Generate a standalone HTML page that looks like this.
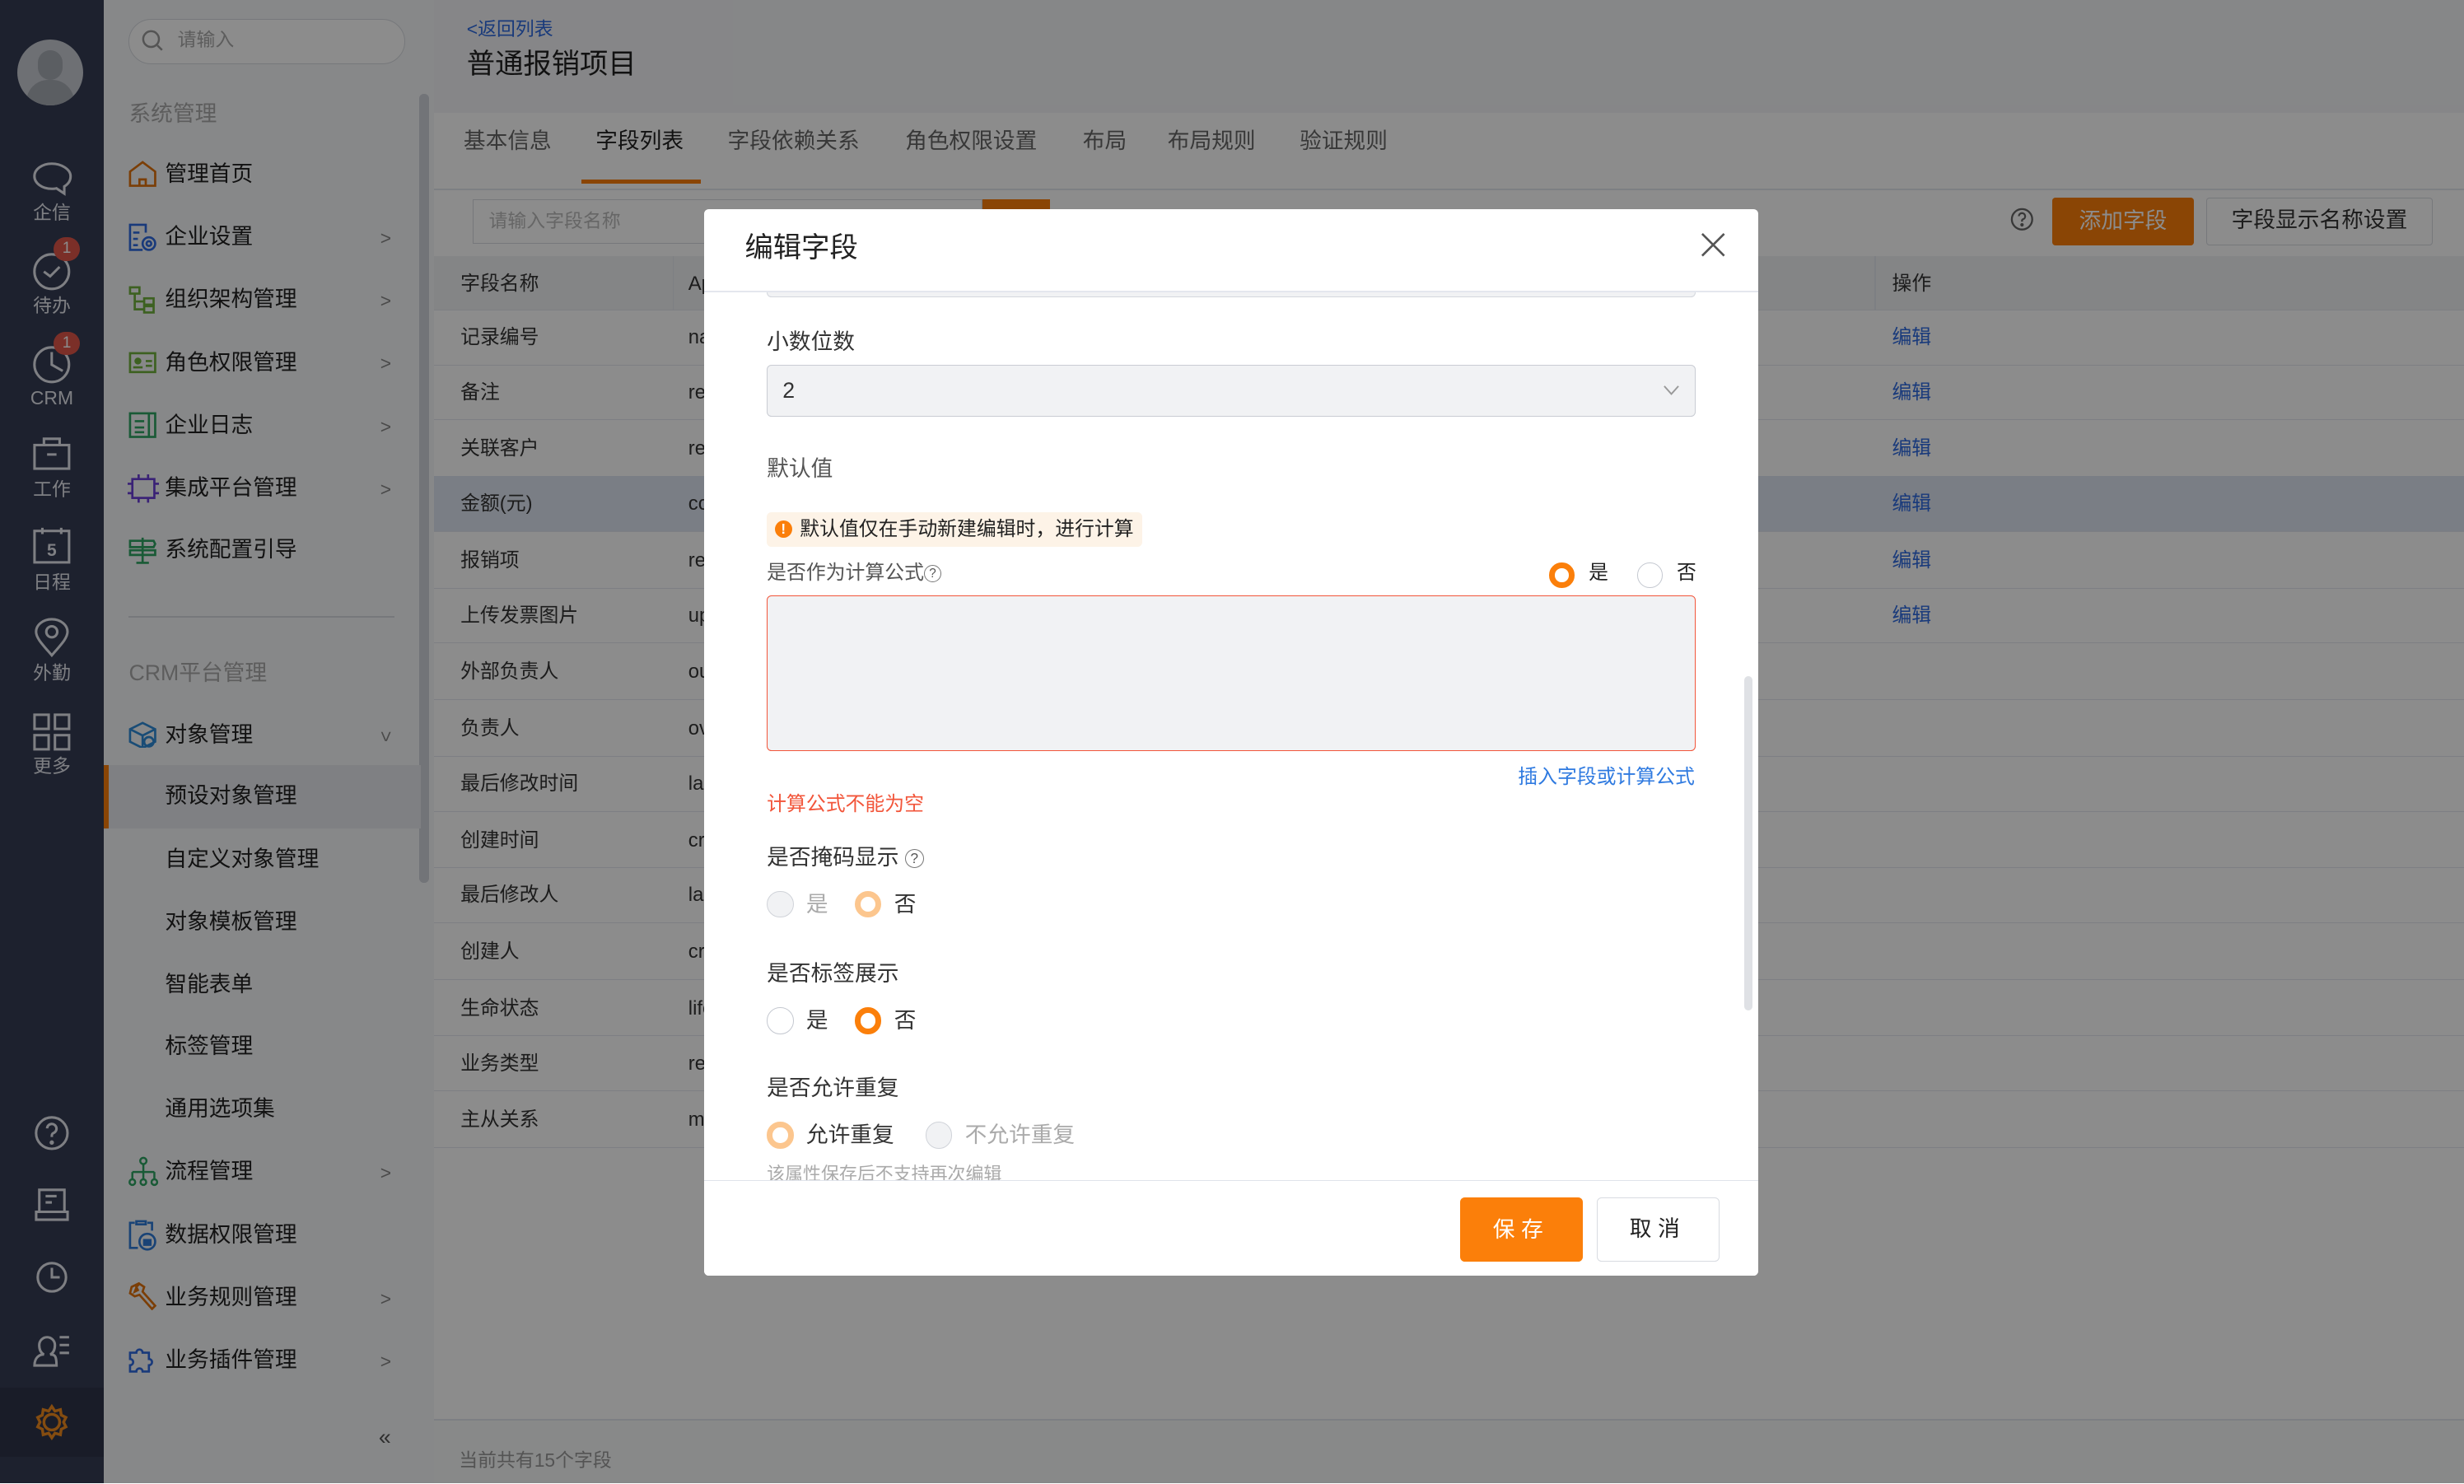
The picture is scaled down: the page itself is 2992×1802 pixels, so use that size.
<!DOCTYPE html>
<html><head><meta charset="utf-8">
<style>
html,body{margin:0;padding:0;}
body{width:2992px;height:1802px;overflow:hidden;background:#fff;font-family:"Liberation Sans","Noto Sans CJK SC",sans-serif;line-height:1.25;}
#w{position:absolute;left:0;top:0;width:1568px;height:944px;zoom:1.9082;overflow:hidden;background:#fff;}
.a{position:absolute;white-space:nowrap;}
.ic{position:absolute;}
.nav{left:0;top:0;width:66px;height:944px;background:#363d55;}
.navt{position:absolute;width:66px;text-align:center;color:#e6e8ee;font-size:12px;}
.menu{left:66px;top:0;width:210px;height:944px;background:#f6f7f9;}
.mi{position:absolute;left:105px;font-size:14px;color:#222;}
.arr{position:absolute;left:242px;font-size:12px;color:#888;}
.row{position:absolute;left:276px;width:1292px;height:35px;border-bottom:1px solid #e4e7ee;font-size:12.5px;color:#333;}
.row span{position:absolute;top:10px;}
.ov{position:absolute;left:0;top:0;width:1568px;height:944px;background:rgba(0,0,0,0.45);}
.m{position:absolute;left:448px;top:133px;width:671px;height:679px;background:#fff;border-radius:3px;overflow:hidden;}
.lab{position:absolute;left:40px;font-size:14px;color:#333;}
.rd{position:absolute;width:14px;height:14px;border-radius:50%;box-sizing:border-box;}
.on{border:4px solid #fb7f0a;background:#fff;}
.off{border:1px solid #c4c8d0;background:#fff;}
.dis{border:1px solid #d0d3d9;background:#f1f2f4;}
.dison{border:4px solid #fcc68e;background:#fff;}
</style></head><body><div id="w">
<!-- nav -->
<div class="a nav">
 <div style="position:absolute;left:11px;top:25px;width:42px;height:42px;border-radius:50%;background:#c9ccd3;overflow:hidden"><div style="position:absolute;left:13px;top:7px;width:16px;height:19px;border-radius:8px;background:#a7abb3"></div><div style="position:absolute;left:6px;top:26px;width:30px;height:20px;border-radius:14px 14px 0 0;background:#a7abb3"></div></div>
 <svg class="ic" style="left:20px;top:101px" width="26" height="26" viewBox="0 0 26 26" fill="none" stroke="#e6e8ee" stroke-width="1.6"><path d="M13 3C7 3 2 6.5 2 11s5 8 11 8c1 0 2 0 3-.3L21 22v-4.5c2.5-1.5 4-3.8 4-6.5C25 6.5 19 3 13 3z"/></svg>
 <div class="navt" style="top:128px">企信</div>
 <svg class="ic" style="left:20px;top:160px" width="26" height="26" viewBox="0 0 26 26" fill="none" stroke="#e6e8ee" stroke-width="1.6"><circle cx="13" cy="13" r="11"/><path d="M8 13l4 3 6-6"/></svg>
 <div style="position:absolute;left:34px;top:151px;width:17px;height:15px;border-radius:8px;background:#e0574a;color:#fff;font-size:10px;text-align:center;line-height:15px">1</div>
 <div class="navt" style="top:187px">待办</div>
 <svg class="ic" style="left:20px;top:219px" width="26" height="26" viewBox="0 0 26 26" fill="none" stroke="#e6e8ee" stroke-width="1.6"><circle cx="13" cy="13" r="11"/><path d="M13 5v8l7 4"/></svg>
 <div style="position:absolute;left:34px;top:211px;width:17px;height:15px;border-radius:8px;background:#e0574a;color:#fff;font-size:10px;text-align:center;line-height:15px">1</div>
 <div class="navt" style="top:246px">CRM</div>
 <svg class="ic" style="left:21px;top:277px" width="24" height="24" viewBox="0 0 24 24" fill="none" stroke="#e6e8ee" stroke-width="1.6"><rect x="1" y="6" width="22" height="15"/><path d="M7 6V2h10v4M9 12h6"/></svg>
 <div class="navt" style="top:304px">工作</div>
 <svg class="ic" style="left:21px;top:335px" width="24" height="24" viewBox="0 0 24 24" fill="none" stroke="#e6e8ee" stroke-width="1.6"><rect x="1" y="3" width="22" height="20"/><path d="M6 1v4M18 1v4"/><text x="12" y="19" font-size="11" fill="#e6e8ee" stroke="none" text-anchor="middle" font-family="Liberation Sans" font-weight="bold">5</text></svg>
 <div class="navt" style="top:363px">日程</div>
 <svg class="ic" style="left:21px;top:393px" width="24" height="26" viewBox="0 0 24 26" fill="none" stroke="#e6e8ee" stroke-width="1.6"><path d="M12 24C6 17 2 13 2 9a10 8 0 0 1 20 0c0 4-4 8-10 15z"/><circle cx="12" cy="9" r="3.5"/></svg>
 <div class="navt" style="top:421px">外勤</div>
 <svg class="ic" style="left:21px;top:454px" width="24" height="24" viewBox="0 0 24 24" fill="none" stroke="#e6e8ee" stroke-width="1.6"><rect x="1" y="1" width="9" height="9"/><rect x="14" y="1" width="9" height="9"/><rect x="1" y="14" width="9" height="9"/><rect x="14" y="14" width="9" height="9"/></svg>
 <div class="navt" style="top:480px">更多</div>
 <svg class="ic" style="left:21px;top:709px" width="24" height="24" viewBox="0 0 24 24" fill="none" stroke="#e6e8ee" stroke-width="1.6"><circle cx="12" cy="12" r="10"/><path d="M9 9a3 3 0 1 1 4 3c-1 .5-1 1-1 2.5"/><circle cx="12" cy="18" r=".6" fill="#e6e8ee"/></svg>
 <svg class="ic" style="left:22px;top:755px" width="22" height="22" viewBox="0 0 22 22" fill="none" stroke="#e6e8ee" stroke-width="1.6"><path d="M3 16V2h16v14M1 16h20v5H1zM7 6h7M7 10h4"/></svg>
 <svg class="ic" style="left:22px;top:802px" width="22" height="22" viewBox="0 0 22 22" fill="none" stroke="#e6e8ee" stroke-width="1.6"><circle cx="11" cy="11" r="9"/><path d="M11 5v6h5"/></svg>
 <svg class="ic" style="left:21px;top:848px" width="24" height="22" viewBox="0 0 24 22" fill="none" stroke="#e6e8ee" stroke-width="1.6"><path d="M1 21c0-5 3-7 6-7-2-1-3-3-3-6a5 5 0 0 1 10 0c0 3-1 5-3 6 3 0 4 1 4 7zM17 3h6M17 8h6M17 13h6"/></svg>
 <div style="position:absolute;left:0;top:883px;width:66px;height:44px;background:#2e3449"></div>
 <svg class="ic" style="left:21px;top:893px" width="24" height="24" viewBox="0 0 24 24" fill="none" stroke="#f08a1e" stroke-width="1.8"><circle cx="12" cy="12" r="5"/><path d="M12 2l2 3 3.5-1 .5 3.5 3 1.5-1.5 3 1.5 3-3 1.5-.5 3.5-3.5-1-2 3-2-3-3.5 1-.5-3.5-3-1.5 1.5-3-1.5-3 3-1.5.5-3.5 3.5 1z"/></svg>
</div>
<!-- menu -->
<div class="a menu">
 <div style="position:absolute;left:16px;top:12px;width:175px;height:28px;border:1px solid #d8dbe1;border-radius:15px;background:#fff"></div>
 <svg class="ic" style="left:24px;top:19px" width="14" height="14" viewBox="0 0 14 14" fill="none" stroke="#999" stroke-width="1.3"><circle cx="6" cy="6" r="5"/><path d="M10 10l3 3"/></svg>
 <div class="a" style="left:47px;top:18px;font-size:12px;color:#aaa">请输入</div>
 <div style="position:absolute;left:201px;top:60px;width:6px;height:502px;border-radius:3px;background:#cfd3da"></div>
 <div class="a" style="left:16px;top:64px;font-size:14px;color:#aaa">系统管理</div>
 <div style="position:absolute;left:16px;top:392px;width:169px;height:1px;background:#d8dbe1"></div>
 <div class="a" style="left:16px;top:420px;font-size:14px;color:#aaa">CRM平台管理</div>
 <div style="position:absolute;left:0;top:487px;width:202px;height:40px;background:#e8eaee"></div>
 <div style="position:absolute;left:0;top:487px;width:3px;height:40px;background:#fb7f0a"></div>
</div>
<svg class="ic" style="left:82px;top:102px" width="18" height="17" viewBox="0 0 18 17" fill="none" stroke="#e0720c" stroke-width="1.4"><path d="M1 16V7l8-6 8 6v9zM7 16v-4h4v4"/></svg>
<svg class="ic" style="left:82px;top:142px" width="18" height="18" viewBox="0 0 18 18" fill="none" stroke="#2f6be0" stroke-width="1.4"><path d="M9 17H1V1h10v5M3 6h4M3 10h3M3 14h3"/><circle cx="13" cy="13" r="4"/><circle cx="13" cy="13" r="1.5"/></svg>
<svg class="ic" style="left:82px;top:182px" width="18" height="18" viewBox="0 0 18 18" fill="none" stroke="#6fb13c" stroke-width="1.4"><rect x="1" y="1" width="6" height="4"/><rect x="10" y="8" width="6" height="4"/><rect x="10" y="13" width="6" height="4"/><path d="M4 5v10h6M4 10h6"/></svg>
<svg class="ic" style="left:82px;top:224px" width="18" height="14" viewBox="0 0 18 14" fill="none" stroke="#6fb13c" stroke-width="1.4"><rect x="1" y="1" width="16" height="12"/><circle cx="6" cy="6" r="1.5" fill="#6fb13c"/><path d="M3 10h6M11 6h4M11 9h4"/></svg>
<svg class="ic" style="left:82px;top:262px" width="18" height="17" viewBox="0 0 18 17" fill="none" stroke="#2fa563" stroke-width="1.4"><rect x="1" y="1" width="16" height="15"/><path d="M4 6h6M4 10h6M4 13h6M13 1v15"/></svg>
<svg class="ic" style="left:81px;top:302px" width="20" height="18" viewBox="0 0 20 18" fill="none" stroke="#6a3ed8" stroke-width="1.4"><rect x="3" y="3" width="14" height="12"/><path d="M0 6h3M0 12h3M17 6h3M17 12h3M7 0v3M13 0v3M7 15v3M13 15v3"/></svg>
<svg class="ic" style="left:82px;top:341px" width="18" height="18" viewBox="0 0 18 18" fill="none" stroke="#2fa563" stroke-width="1.4"><path d="M1 3h15l1 2-1 2H1zM1 9h16v3H1zM9 1v16M5 17h8"/></svg>
<svg class="ic" style="left:82px;top:458px" width="18" height="18" viewBox="0 0 18 18" fill="none" stroke="#2f8bd8" stroke-width="1.4"><path d="M1 6l8-4 8 4v8l-8 4-8-4zM1 6l8 4 8-4M9 10v8"/><circle cx="13" cy="14" r="3"/></svg>
<svg class="ic" style="left:81px;top:736px" width="20" height="19" viewBox="0 0 20 19" fill="none" stroke="#2fa563" stroke-width="1.3"><circle cx="10" cy="3" r="2"/><path d="M10 5v5M3 10h14M3 10v5M10 10v5M17 10v5"/><circle cx="3" cy="16.5" r="1.8"/><circle cx="10" cy="16.5" r="1.8"/><circle cx="17" cy="16.5" r="1.8"/></svg>
<svg class="ic" style="left:82px;top:776px" width="18" height="20" viewBox="0 0 18 20" fill="none" stroke="#2f7ad8" stroke-width="1.4"><path d="M6 18H1V2h3M12 2h3v5M5 1h6v2H5z"/><circle cx="12" cy="14" r="5"/><rect x="10" y="13" width="4" height="3" fill="#2f7ad8"/></svg>
<svg class="ic" style="left:82px;top:816px" width="18" height="18" viewBox="0 0 18 18" fill="none" stroke="#e0720c" stroke-width="1.4"><path d="M6 1L2 3 1 7l3 2 3-1 8 9 2-2-8-9 1-3-3-2-2 2 1 2-2 1z"/></svg>
<svg class="ic" style="left:82px;top:856px" width="18" height="18" viewBox="0 0 18 18" fill="none" stroke="#2f6be0" stroke-width="1.4"><path d="M1 5h4a2 2 0 1 1 4 0h4v4a2 2 0 1 1 0 4v4H9a2 2 0 1 0-4 0H1v-4a2 2 0 1 0 0-4z"/></svg>
<div class="mi" style="top:102px">管理首页</div>
<div class="mi" style="top:142px">企业设置</div><div class="arr" style="top:144px">&gt;</div>
<div class="mi" style="top:182px">组织架构管理</div><div class="arr" style="top:184px">&gt;</div>
<div class="mi" style="top:222px">角色权限管理</div><div class="arr" style="top:224px">&gt;</div>
<div class="mi" style="top:262px">企业日志</div><div class="arr" style="top:264px">&gt;</div>
<div class="mi" style="top:302px">集成平台管理</div><div class="arr" style="top:304px">&gt;</div>
<div class="mi" style="top:341px">系统配置引导</div>
<div class="mi" style="top:459px">对象管理</div><div class="arr" style="top:461px;transform:rotate(90deg)">&gt;</div>
<div class="mi" style="top:498px">预设对象管理</div>
<div class="mi" style="top:538px">自定义对象管理</div>
<div class="mi" style="top:578px">对象模板管理</div>
<div class="mi" style="top:618px">智能表单</div>
<div class="mi" style="top:657px">标签管理</div>
<div class="mi" style="top:697px">通用选项集</div>
<div class="mi" style="top:737px">流程管理</div><div class="arr" style="top:739px">&gt;</div>
<div class="mi" style="top:777px">数据权限管理</div>
<div class="mi" style="top:817px">业务规则管理</div><div class="arr" style="top:819px">&gt;</div>
<div class="mi" style="top:857px">业务插件管理</div><div class="arr" style="top:859px">&gt;</div>
<div class="a" style="left:241px;top:906px;font-size:14px;color:#555">«</div>
<!-- main -->
<div class="a" style="left:276px;top:0;width:1292px;height:944px;background:#fff"></div>
<div class="a" style="left:276px;top:0;width:1292px;height:72px;background:#f4f5f7"></div>
<div class="a" style="left:297px;top:11px;font-size:12px;color:#2f6be0">&lt;返回列表</div>
<div class="a" style="left:297px;top:30px;font-size:18px;color:#222">普通报销项目</div>
<div class="a" style="left:276px;top:120px;width:1292px;height:1px;background:#e4e7ee"></div>
<div class="a" style="left:295px;top:81px;font-size:14px;color:#666;word-spacing:0">基本信息</div>
<div class="a" style="left:379px;top:81px;font-size:14px;color:#222">字段列表</div>
<div class="a" style="left:370px;top:114px;width:76px;height:3px;background:#fb7f0a"></div>
<div class="a" style="left:463px;top:81px;font-size:14px;color:#666">字段依赖关系</div>
<div class="a" style="left:576px;top:81px;font-size:14px;color:#666">角色权限设置</div>
<div class="a" style="left:689px;top:81px;font-size:14px;color:#666">布局</div>
<div class="a" style="left:743px;top:81px;font-size:14px;color:#666">布局规则</div>
<div class="a" style="left:827px;top:81px;font-size:14px;color:#666">验证规则</div>
<div class="a" style="left:301px;top:127px;width:324px;height:28px;border:1px solid #d8dbe1;box-sizing:border-box;background:#fff"></div>
<div class="a" style="left:311px;top:133px;font-size:12px;color:#bbb">请输入字段名称</div>
<div class="a" style="left:625px;top:127px;width:43px;height:28px;background:#fb7f0a"></div>
<svg class="ic" style="left:1279px;top:132px" width="15" height="15" viewBox="0 0 15 15" fill="none" stroke="#666" stroke-width="1.2"><circle cx="7.5" cy="7.5" r="6.5"/><path d="M5.5 5.5a2 2 0 1 1 2.5 2c-.5.3-.5.6-.5 1.5"/><circle cx="7.5" cy="11" r=".5" fill="#666"/></svg>
<div class="a" style="left:1306px;top:126px;width:90px;height:30px;background:#fb7f0a;border-radius:2px;color:#fff;font-size:14px;text-align:center;line-height:30px">添加字段</div>
<div class="a" style="left:1404px;top:126px;width:144px;height:30px;border:1px solid #d8dbe1;box-sizing:border-box;border-radius:2px;color:#333;font-size:14px;text-align:center;line-height:28px">字段显示名称设置</div>
<div class="a" style="left:276px;top:163px;width:1292px;height:34px;background:#f0f2f5;border-bottom:1px solid #e4e7ee"></div>
<div class="a" style="left:276px;top:163px;width:152px;height:34px;border-right:1px solid #e4e7ee"></div>
<div class="a" style="left:1193px;top:163px;width:1px;height:34px;background:#e4e7ee"></div>
<div class="a" style="left:293px;top:173px;font-size:12.5px;color:#333">字段名称</div>
<div class="a" style="left:438px;top:173px;font-size:12.5px;color:#333">Ap</div>
<div class="a" style="left:1204px;top:173px;font-size:12.5px;color:#333">操作</div>
<div class="row" style="top:197px"><span style="left:17px">记录编号</span><span style="left:162px">na</span><span style="left:928px;color:#2f6be0">编辑</span></div>
<div class="row" style="top:232px"><span style="left:17px">备注</span><span style="left:162px">re</span><span style="left:928px;color:#2f6be0">编辑</span></div>
<div class="row" style="top:268px"><span style="left:17px">关联客户</span><span style="left:162px">re</span><span style="left:928px;color:#2f6be0">编辑</span></div>
<div class="row" style="top:303px;background:#dfe6f3"><span style="left:17px">金额(元)</span><span style="left:162px">cc</span><span style="left:928px;color:#2f6be0">编辑</span></div>
<div class="row" style="top:339px"><span style="left:17px">报销项</span><span style="left:162px">re</span><span style="left:928px;color:#2f6be0">编辑</span></div>
<div class="row" style="top:374px"><span style="left:17px">上传发票图片</span><span style="left:162px">up</span><span style="left:928px;color:#2f6be0">编辑</span></div>
<div class="row" style="top:410px"><span style="left:17px">外部负责人</span><span style="left:162px">ou</span></div>
<div class="row" style="top:446px"><span style="left:17px">负责人</span><span style="left:162px">ov</span></div>
<div class="row" style="top:481px"><span style="left:17px">最后修改时间</span><span style="left:162px">la</span></div>
<div class="row" style="top:517px"><span style="left:17px">创建时间</span><span style="left:162px">cr</span></div>
<div class="row" style="top:552px"><span style="left:17px">最后修改人</span><span style="left:162px">la</span></div>
<div class="row" style="top:588px"><span style="left:17px">创建人</span><span style="left:162px">cr</span></div>
<div class="row" style="top:624px"><span style="left:17px">生命状态</span><span style="left:162px">life</span></div>
<div class="row" style="top:659px"><span style="left:17px">业务类型</span><span style="left:162px">re</span></div>
<div class="row" style="top:695px"><span style="left:17px">主从关系</span><span style="left:162px">m</span></div>
<div class="a" style="left:276px;top:903px;width:1292px;height:1px;background:#e4e7ee"></div>
<div class="a" style="left:276px;top:904px;width:1292px;height:40px;background:#f8f9fa"></div>
<div class="a" style="left:292px;top:922px;font-size:12px;color:#999">当前共有15个字段</div>
<div class="ov"></div>
<!-- modal -->
<div class="m">
 <div class="a" style="left:26px;top:14px;font-size:18px;color:#222">编辑字段</div>
 <svg class="ic" style="left:634px;top:15px" width="16" height="16" viewBox="0 0 16 16" stroke="#555" stroke-width="1.4"><path d="M1 1l14 14M15 1L1 15"/></svg>
 <div class="a" style="left:40px;top:44px;width:591px;height:12px;border:1px solid #d4d7dd;border-top:none;border-radius:0 0 3px 3px;background:#f1f2f4;box-sizing:border-box"></div>
 <div class="a" style="left:0;top:40px;width:671px;height:12px;background:#fff"></div>
 <div class="a" style="left:0;top:52px;width:671px;height:1px;background:#e4e7ee"></div>
 <div class="lab" style="top:76px">小数位数</div>
 <div class="a" style="left:40px;top:99px;width:591px;height:33px;border:1px solid #c9ccd3;border-radius:3px;background:#f1f2f4;box-sizing:border-box"></div>
 <div class="a" style="left:50px;top:107px;font-size:14px;color:#333">2</div>
 <svg class="ic" style="left:610px;top:112px" width="11" height="7" viewBox="0 0 11 7" fill="none" stroke="#999" stroke-width="1"><path d="M1 1l4.5 5L10 1"/></svg>
 <div class="lab" style="top:157px;color:#555">默认值</div>
 <div class="a" style="left:40px;top:193px;width:239px;height:22px;background:#fdf3e7;border-radius:3px"></div>
 <div class="a" style="left:45px;top:198px;width:11px;height:11px;border-radius:50%;background:#fb7f0a;color:#fff;font-size:9px;text-align:center;line-height:11px;font-weight:bold">!</div>
 <div class="a" style="left:61px;top:196px;font-size:12.5px;color:#222">默认值仅在手动新建编辑时，进行计算</div>
 <div class="a" style="left:40px;top:224px;font-size:12.5px;color:#555">是否作为计算公式<span style="display:inline-block;width:10px;height:10px;border:1px solid #777;border-radius:50%;font-size:8px;line-height:10px;text-align:center;vertical-align:1px">?</span></div>
 <div class="rd on" style="left:538px;top:225px;width:16px;height:16px"></div><div class="a" style="left:563px;top:224px;font-size:12.5px;color:#222">是</div>
 <div class="rd off" style="left:594px;top:225px;width:16px;height:16px"></div><div class="a" style="left:619px;top:224px;font-size:12.5px;color:#222">否</div>
 <div class="a" style="left:40px;top:246px;width:591px;height:99px;border:1px solid #f2553a;border-radius:3px;background:#f1f2f4;box-sizing:border-box"></div>
 <div class="a" style="left:518px;top:354px;font-size:12.5px;color:#2f7ae0">插入字段或计算公式</div>
 <div class="a" style="left:40px;top:371px;font-size:12.5px;color:#f2553a">计算公式不能为空</div>
 <div class="lab" style="top:404px">是否掩码显示 <span style="display:inline-block;width:11px;height:11px;border:1px solid #777;border-radius:50%;font-size:9px;line-height:11px;text-align:center;vertical-align:1px;color:#555">?</span></div>
 <div class="rd dis" style="left:40px;top:434px;width:17px;height:17px"></div><div class="a" style="left:65px;top:434px;font-size:14px;color:#aaa">是</div>
 <div class="rd dison" style="left:96px;top:434px;width:17px;height:17px"></div><div class="a" style="left:121px;top:434px;font-size:14px;color:#333">否</div>
 <div class="lab" style="top:478px">是否标签展示</div>
 <div class="rd off" style="left:40px;top:508px;width:17px;height:17px"></div><div class="a" style="left:65px;top:508px;font-size:14px;color:#333">是</div>
 <div class="rd on" style="left:96px;top:508px;width:17px;height:17px"></div><div class="a" style="left:121px;top:508px;font-size:14px;color:#333">否</div>
 <div class="lab" style="top:551px">是否允许重复</div>
 <div class="rd dison" style="left:40px;top:581px;width:17px;height:17px"></div><div class="a" style="left:65px;top:581px;font-size:14px;color:#333">允许重复</div>
 <div class="rd dis" style="left:141px;top:581px;width:17px;height:17px"></div><div class="a" style="left:166px;top:581px;font-size:14px;color:#aaa">不允许重复</div>
 <div class="a" style="left:40px;top:607px;font-size:11.5px;color:#aaa">该属性保存后不支持再次编辑</div>
 <div class="a" style="left:0;top:618px;width:671px;height:61px;background:#fff;border-top:1px solid #e0e3ea"></div>
 <div class="a" style="left:662px;top:297px;width:5px;height:213px;border-radius:3px;background:#dfe1e5"></div>
 <div class="a" style="left:481px;top:629px;width:78px;height:41px;background:#fb7f0a;border-radius:3px;color:#fff;font-size:14px;text-align:center;line-height:41px;letter-spacing:4px">保存</div>
 <div class="a" style="left:568px;top:629px;width:78px;height:41px;border:1px solid #d8dbe1;box-sizing:border-box;border-radius:3px;color:#222;font-size:14px;text-align:center;line-height:39px;letter-spacing:4px">取消</div>
</div>
</div></body></html>
